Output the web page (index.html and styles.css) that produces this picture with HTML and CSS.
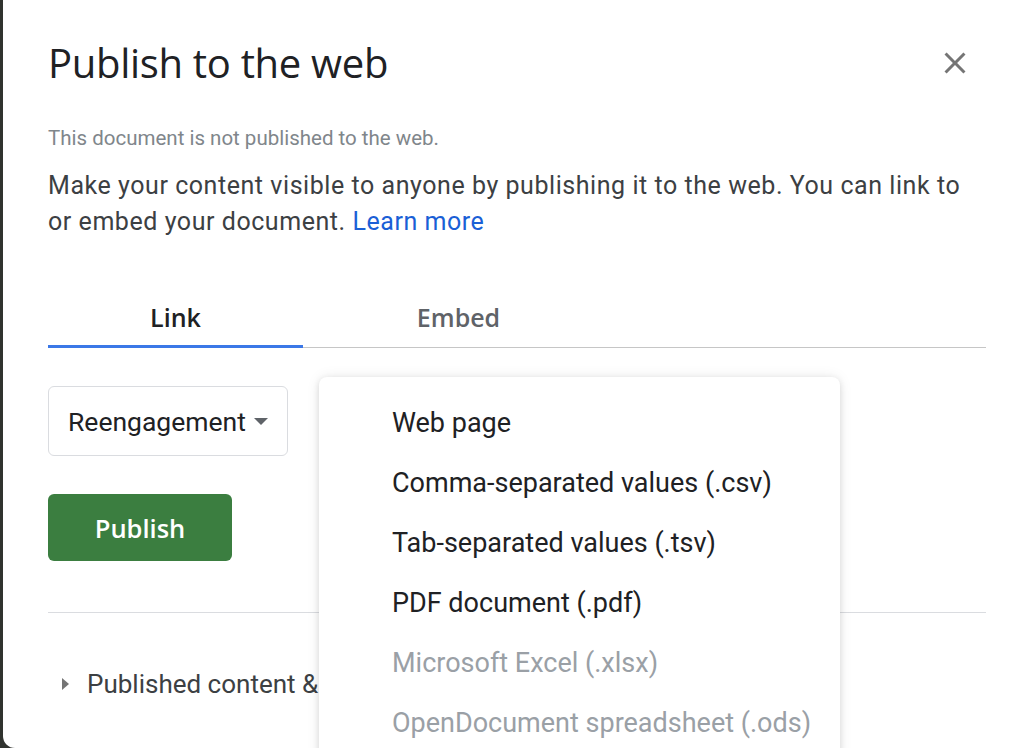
FILE: index.html
```html
<!DOCTYPE html>
<html lang="en">
<head>
    <meta charset="UTF-8">
    <meta name="viewport" content="width=device-width, initial-scale=1.0">
    <title>Publish to the web</title>
    <link rel="stylesheet" href="styles.css">
</head>
<body>
    <div class="dialog">
        <header class="dialog-header">
            <h1>Publish to the web</h1>
            <button class="close" aria-label="Close">
                <svg width="36" height="36" viewBox="0 0 24 24"><path d="M19 6.41L17.59 5 12 10.59 6.41 5 5 6.41 10.59 12 5 17.59 6.41 19 12 13.41 17.59 19 19 17.59 13.41 12z" fill="#757575"/></svg>
            </button>
        </header>

        <p class="status">This document is not published to the web.</p>
        <p class="intro">Make your content visible to anyone by publishing it to the web. You can link to or embed your document. <a href="#">Learn more</a></p>

        <div class="tabs">
            <div class="tab active">Link</div>
            <div class="tab embed">Embed</div>
        </div>

        <div class="options">
            <div class="select">
                <span>Reengagement</span>
                <span class="caret"></span>
            </div>

            <!-- menu ouvert -->
            <ul class="menu">
                <li>Web page</li>
                <li>Comma-separated values (.csv)</li>
                <li>Tab-separated values (.tsv)</li>
                <li>PDF document (.pdf)</li>
                <li class="disabled">Microsoft Excel (.xlsx)</li>
                <li class="disabled">OpenDocument spreadsheet (.ods)</li>
            </ul>
        </div>

        <button class="btn-publish">Publish</button>

        <hr class="divider">

        <div class="settings">
            <span class="arrow"></span>
            <span>Published content &amp; settings</span>
        </div>
    </div>
</body>
</html>
```

FILE: styles.css
```css
body {
    margin: 0;
    padding: 0;
    background-color: #30332f;
    font-family: Roboto, "Liberation Sans", Arial, sans-serif;
    overflow: hidden;
    height: 748px;
}

.dialog {
    box-sizing: border-box;
    margin: -12px 0 0 3px;
    width: 1021px;
    height: 760px;
    background-color: #fff;
    border-radius: 0 0 0 12px;
    padding: 51px 0 0 45px;
    position: relative;
    overflow: hidden;
}

.dialog-header {
    display: flex;
    justify-content: space-between;
    align-items: center;
    width: 925px;
    height: 48px;
}

.dialog-header h1 {
    margin: 0;
    font-family: "Open Sans", Roboto, sans-serif;
    font-weight: 400;
    font-size: 40px;
    line-height: 48px;
    letter-spacing: -0.3px;
    color: #202124;
}

.close {
    background: none;
    border: none;
    padding: 0;
    width: 36px;
    height: 36px;
    cursor: pointer;
}

.status {
    margin: 37px 0 0;
    font-size: 20.5px;
    line-height: 28px;
    color: #80868b;
}

.intro {
    margin: 16px 0 0;
    width: 920px;
    font-size: 25px;
    letter-spacing: 0.55px;
    line-height: 36px;
    color: #3c4043;
}

.intro a {
    color: #1a5fd6;
    text-decoration: none;
}

.tabs {
    display: flex;
    width: 938px;
    margin-top: 48px;
    border-bottom: 1px solid #c6c6c6;
}

.tab {
    width: 255px;
    height: 58px;
    line-height: 58px;
    text-align: center;
    font-family: "Open Sans", Roboto, sans-serif;
    font-weight: 600;
    font-size: 25px;
    color: #5f6368;
    margin-bottom: -1px;
}

.tab.embed {
    width: 311px;
}

.tab.active {
    color: #202124;
    border-bottom: 3px solid #3b78e7;
    height: 57px;
}

.options {
    margin-top: 38px;
    position: relative;
}

.select {
    box-sizing: border-box;
    display: flex;
    align-items: center;
    justify-content: space-between;
    width: 240px;
    height: 70px;
    padding: 0 19px;
    border: 1px solid #dadce0;
    border-radius: 6px;
    font-size: 26.5px;
    color: #202124;
}

.caret {
    width: 0;
    height: 0;
    border-left: 7px solid transparent;
    border-right: 7px solid transparent;
    border-top: 7px solid #5f6368;
}

.menu {
    position: absolute;
    top: -9px;
    left: 271px;
    width: 521px;
    margin: 0;
    padding: 16px 0 0;
    list-style: none;
    background-color: #fff;
    border-radius: 8px;
    box-shadow: 0 2px 6px rgba(0, 0, 0, 0.12), 0 0 14px rgba(0, 0, 0, 0.08);
    height: 400px;
    z-index: 10;
}

.menu li {
    height: 60px;
    line-height: 60px;
    padding-left: 73px;
    font-size: 27px;
    color: #202124;
}

.menu li.disabled {
    color: #9aa0a6;
}

.btn-publish {
    display: block;
    margin-top: 38px;
    width: 184px;
    height: 67px;
    border: none;
    border-radius: 6px;
    background-color: #3b7e40;
    color: #fff;
    font-family: "Open Sans", Roboto, sans-serif;
    font-weight: 600;
    font-size: 25.5px;
    cursor: pointer;
}

.divider {
    margin: 51px 0 0;
    width: 938px;
    border: none;
    border-top: 1px solid #dadce0;
}

.settings {
    display: flex;
    align-items: center;
    margin-top: 56px;
    padding-left: 14px;
    font-size: 26px;
    color: #3c4043;
}

.arrow {
    width: 0;
    height: 0;
    border-top: 6px solid transparent;
    border-bottom: 6px solid transparent;
    border-left: 7px solid #757575;
    margin-right: 18px;
}
```
